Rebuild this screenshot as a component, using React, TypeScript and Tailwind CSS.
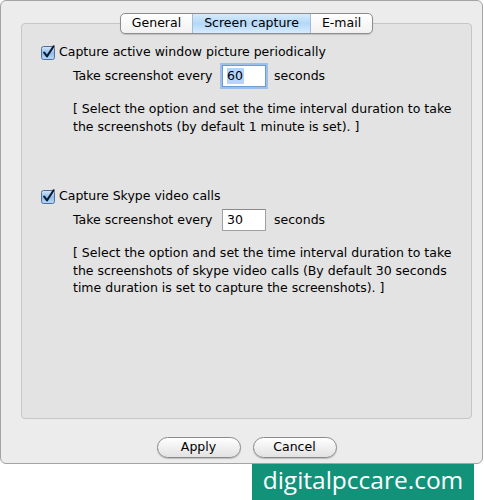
import { useState } from "react";

const font = "font-['DejaVu_Sans','Liberation_Sans',sans-serif]";

const tabs = ["General", "Screen capture", "E-mail"];

function CheckBox() {
  return (
    <svg width="15" height="15" viewBox="0 0 15 15" className="shrink-0">
      <defs>
        <linearGradient id="cb" x1="0" y1="0" x2="0" y2="1">
          <stop offset="0" stopColor="#d7e8fb" />
          <stop offset="0.5" stopColor="#8fbcef" />
          <stop offset="1" stopColor="#b9d8fb" />
        </linearGradient>
      </defs>
      <rect x="0.5" y="1.5" width="13" height="13" rx="2" fill="url(#cb)" stroke="#4f6f98" />
      <path d="M3.2 7.6 L6 11.4 L12.6 1.2" fill="none" stroke="#0d1a2c" strokeWidth="2" strokeLinecap="round" strokeLinejoin="round" />
    </svg>
  );
}

function NumberBox({ value, focused }: { value: string; focused?: boolean }) {
  return (
    <div
      className={
        focused
          ? "w-[44px] h-[22px] bg-white border border-[#6d9bd4] shadow-[0_0_0_2px_#9dc0ea] flex items-center px-[4px]"
          : "w-[44px] h-[22px] bg-white border border-[#a0a0a0] border-t-[#8a8a8a] flex items-center px-[4px]"
      }
    >
      <span className={focused ? "bg-[#b5d5ff] leading-[16px] pr-[1px]" : "leading-[16px]"}>{value}</span>
    </div>
  );
}

function Option({
  label,
  value,
  focused,
  note,
}: {
  label: string;
  value: string;
  focused?: boolean;
  note: string[];
}) {
  return (
    <div className="flex flex-col">
      <div className="flex items-center gap-[3px] h-[16px]">
        <CheckBox />
        <span>{label}</span>
      </div>
      <div className="flex items-center ml-[32px] mt-[5px] h-[22px]">
        <span className="w-[149px]">Take screenshot every</span>
        <NumberBox value={value} focused={focused} />
        <span className="ml-[8px]">seconds</span>
      </div>
      <div className="ml-[32px] mt-[13px] leading-[17.5px]">
        {note.map((line) => (
          <div key={line}>{line}</div>
        ))}
      </div>
    </div>
  );
}

export default function App() {
  const [active, setActive] = useState(1);

  return (
    <div className={`w-[484px] h-[500px] bg-white text-[12.5px] text-black ${font}`}>
      <div className="w-[483px] h-[464px] bg-[#ececec] border border-[#a3a3a3] rounded-[6px] flex flex-col">
        {/* group box with tabs sitting on its top edge */}
        <div className="ml-[20px] mr-[10px] mt-[22px] h-[396px] border border-[#c6c6c6] bg-[#e3e3e3] rounded-[4px] flex flex-col">
          <div className="flex justify-center -mt-[11px]">
            <div className="flex h-[21px] border border-[#8d8d8d] rounded-[5px] overflow-hidden bg-gradient-to-b from-white to-[#f1f1f1] shadow-[0_1px_1px_rgba(0,0,0,0.15)]">
              {tabs.map((t, i) => (
                <button
                  key={t}
                  onClick={() => setActive(i)}
                  className={
                    i === active
                      ? "px-[11px] flex items-center border-x border-[#a7bbd2] bg-gradient-to-b from-[#d6ebfd] via-[#b4d8f8] to-[#d7ecfd]"
                      : "px-[11px] flex items-center"
                  }
                >
                  {t}
                </button>
              ))}
            </div>
          </div>

          <div className="flex flex-col pl-[19px] pt-[10px]">
            <Option
              label="Capture active window picture periodically"
              value="60"
              focused
              note={[
                "[ Select the option and set the time interval duration to take",
                "the screenshots (by default 1 minute is set). ]",
              ]}
            />
            <div className="mt-[53px]">
              <Option
                label="Capture Skype video calls"
                value="30"
                note={[
                  "[ Select the option and set the time interval duration to take",
                  "the screenshots of skype video calls (By default 30 seconds",
                  "time duration is set to capture the screenshots). ]",
                ]}
              />
            </div>
          </div>
        </div>

        <div className="flex justify-center gap-[12px] mt-[18px] pl-[10px]">
          {["Apply", "Cancel"].map((b) => (
            <button
              key={b}
              className="w-[84px] h-[21px] rounded-full border border-[#8a8a8a] bg-gradient-to-b from-white via-[#f0f0f0] to-[#e2e2e2] shadow-[0_1px_1px_rgba(0,0,0,0.2)] flex items-center justify-center"
            >
              {b}
            </button>
          ))}
        </div>
      </div>

      <div className="ml-[252px] w-[222px] h-[36px] bg-[#13927a] flex items-center justify-center">
        <span className="text-white text-[24.5px] leading-none font-['Open_Sans','Noto_Sans',sans-serif] -mt-[3px]">
          digitalpccare.com
        </span>
      </div>
    </div>
  );
}
